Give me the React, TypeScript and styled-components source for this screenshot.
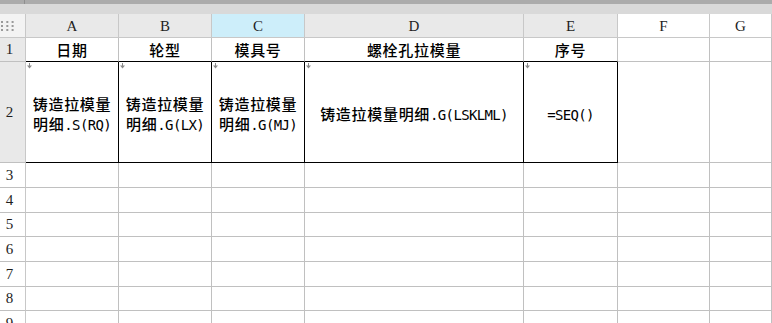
import React from "react";
import styled, { createGlobalStyle } from "styled-components";

const Global = createGlobalStyle`
  html, body { margin: 0; padding: 0; background: #ffffff; overflow: hidden; }
  body { width: 772px; height: 323px; }
  * { box-sizing: border-box; }
`;

const GRID = "#c0c0c0";
const HEAD_LINE = "#c8c8c8";

const Page = styled.div`
  width: 772px;
  height: 323px;
  overflow: hidden;
  display: flex;
  flex-direction: column;
`;

const TopBar = styled.div`
  height: 4px;
  background: #ababab;
  display: flex;
  flex: none;
`;

const TopDivider = styled.div`
  width: 25px;
  height: 100%;
  border-right: 1px solid #8f8f8f;
`;

const SubBar = styled.div`
  height: 10px;
  background: #d9d9d9;
  flex: none;
`;

const Sheet = styled.div`
  display: grid;
  grid-template-columns: 26px 93px 93px 93px 219px 94px 92px 1fr;
  grid-template-rows: 24px 24px 101px 25px 25px 24px 25px 25px 24px 25px;
  flex: none;
`;

const Corner = styled.div`
  background: #f3f3f3;
  border-right: 1px solid ${HEAD_LINE};
  border-bottom: 1px solid ${HEAD_LINE};
  display: flex;
  align-items: center;
  padding-left: 1px;
`;

const ColHead = styled.div<{ $active?: boolean; $blank?: boolean }>`
  background: ${(p) => (p.$active ? "#cdeefa" : p.$blank ? "#ffffff" : "#e9e9e9")};
  border-right: 1px solid ${HEAD_LINE};
  border-bottom: 1px solid ${HEAD_LINE};
  display: flex;
  align-items: center;
  justify-content: center;
  font-family: "Liberation Serif", "DejaVu Serif", serif;
  font-size: 15px;
  color: #1e1e1e;
  padding-top: 1px;
`;

const RowHead = styled.div<{ $shaded?: boolean }>`
  background: ${(p) => (p.$shaded ? "#e9e9e9" : "#ffffff")};
  border-right: 1px solid ${HEAD_LINE};
  border-bottom: 1px solid ${GRID};
  display: flex;
  align-items: center;
  justify-content: center;
  padding-right: 6px;
  font-family: "Liberation Serif", "DejaVu Serif", serif;
  font-size: 15px;
  color: #1e1e1e;
`;

const Cell = styled.div<{ $boxRight?: boolean; $boxBottom?: boolean; $pad?: number }>`
  position: relative;
  border-right: 1px solid ${(p) => (p.$boxRight ? "#000000" : GRID)};
  border-bottom: 1px solid ${(p) => (p.$boxBottom ? "#000000" : GRID)};
  display: flex;
  align-items: center;
  justify-content: center;
  padding-top: ${(p) => p.$pad ?? 0}px;
  font-family: "Noto Sans CJK SC", "Noto Sans", sans-serif;
  font-size: 15px;
  font-weight: 500;
  line-height: 20px;
  letter-spacing: 0.7px;
  color: #000000;
`;

const CellText = styled.div`
  text-align: center;
  white-space: nowrap;
`;

const Lat = styled.span`
  font-family: "DejaVu Sans Mono", "Liberation Mono", monospace;
  font-size: 14px;
  font-weight: 400;
  letter-spacing: -0.65px;
`;

const Marker = styled.svg`
  position: absolute;
  left: 1px;
  top: 1px;
  width: 5px;
  height: 6px;
`;

const DotsIcon = () => (
  <svg width="14" height="12" viewBox="0 0 14 12">
    {[0, 1, 2].map((r) =>
      [0, 1, 2].map((c) => (
        <rect key={`${r}-${c}`} x={c * 5.3} y={r * 4 + 1} width="2" height="2" fill="#9a9a9a" />
      ))
    )}
  </svg>
);

const Mark = () => (
  <Marker viewBox="0 0 5 6">
    <line x1="2.5" y1="0" x2="2.5" y2="3" stroke="#8a8a8a" strokeWidth="1" />
    <polygon points="0,2.5 5,2.5 2.5,5.5" fill="#8a8a8a" />
  </Marker>
);

const cols = ["A", "B", "C", "D", "E", "F", "G"];
const titles = ["日期", "轮型", "模具号", "螺栓孔拉模量", "序号", "", ""];

type Part = { t: string; lat?: boolean };
const formulas: Part[][][] = [
  [[{ t: "铸造拉模量" }], [{ t: "明细" }, { t: ".S(RQ)", lat: true }]],
  [[{ t: "铸造拉模量" }], [{ t: "明细" }, { t: ".G(LX)", lat: true }]],
  [[{ t: "铸造拉模量" }], [{ t: "明细" }, { t: ".G(MJ)", lat: true }]],
  [[{ t: "铸造拉模量明细" }, { t: ".G(LSKLML)", lat: true }]],
  [[{ t: "=SEQ()", lat: true }]],
];

const renderLines = (lines: Part[][]) => (
  <CellText>
    {lines.map((line, i) => (
      <React.Fragment key={i}>
        {i > 0 && <br />}
        {line.map((p, j) => (p.lat ? <Lat key={j}>{p.t}</Lat> : <span key={j}>{p.t}</span>))}
      </React.Fragment>
    ))}
  </CellText>
);

export default function App() {
  return (
    <Page>
      <Global />
      <TopBar>
        <TopDivider />
      </TopBar>
      <SubBar />
      <Sheet>
        <Corner>
          <DotsIcon />
        </Corner>
        {cols.map((c, i) => (
          <ColHead key={c} $active={c === "C"} $blank={i >= 5}>
            {c}
          </ColHead>
        ))}

        <RowHead $shaded>1</RowHead>
        {titles.map((t, i) => (
          <Cell key={i} $boxBottom={i < 5}>
            {t}
          </Cell>
        ))}

        <RowHead $shaded>2</RowHead>
        {cols.map((c, i) =>
          i < 5 ? (
            <Cell key={c} $boxRight $boxBottom $pad={5}>
              <Mark />
              {renderLines(formulas[i])}
            </Cell>
          ) : (
            <Cell key={c} />
          )
        )}

        {[3, 4, 5, 6, 7, 8, 9].map((r) => (
          <React.Fragment key={r}>
            <RowHead>{r}</RowHead>
            {cols.map((c) => (
              <Cell key={c} />
            ))}
          </React.Fragment>
        ))}
      </Sheet>
    </Page>
  );
}
